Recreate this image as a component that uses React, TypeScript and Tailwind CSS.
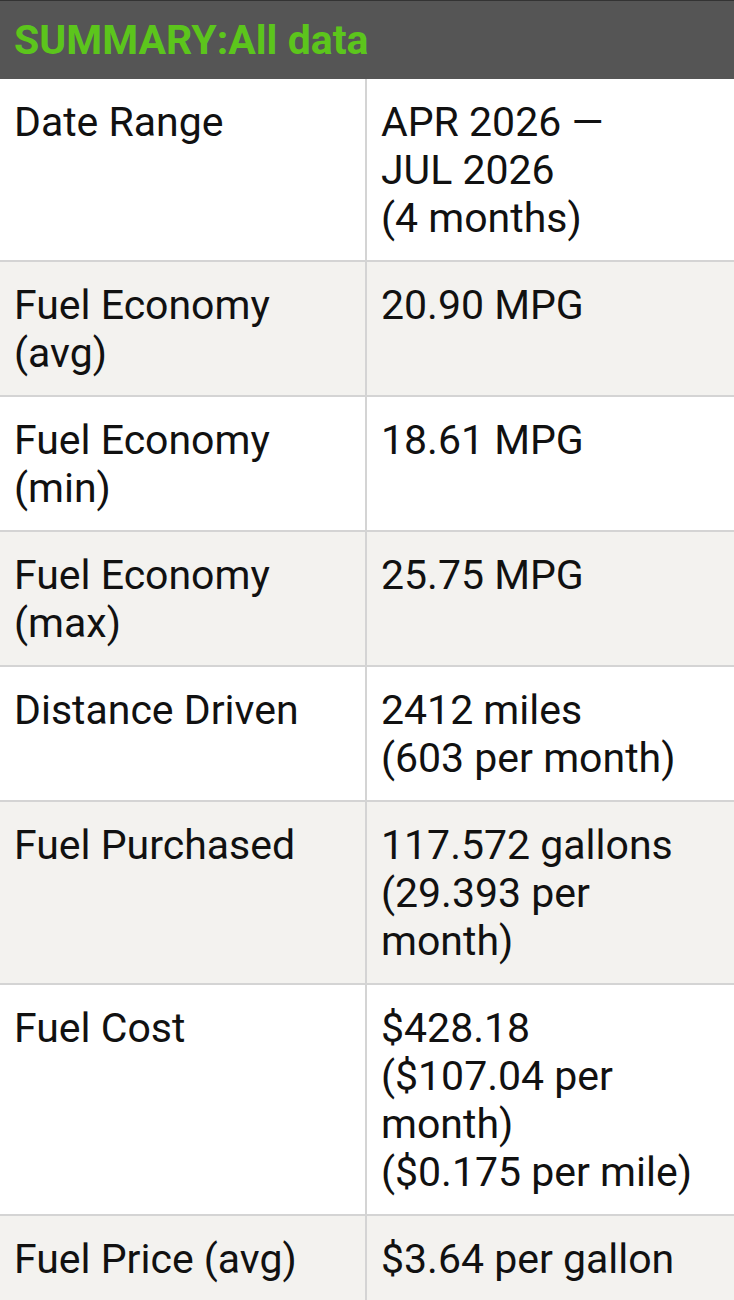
const rows: { label: string[]; value: string[] }[] = [
  { label: ['Date Range'], value: ['APR 2026 —', 'JUL 2026', '(4 months)'] },
  { label: ['Fuel Economy', '(avg)'], value: ['20.90 MPG'] },
  { label: ['Fuel Economy', '(min)'], value: ['18.61 MPG'] },
  { label: ['Fuel Economy', '(max)'], value: ['25.75 MPG'] },
  { label: ['Distance Driven'], value: ['2412 miles', '(603 per month)'] },
  { label: ['Fuel Purchased'], value: ['117.572 gallons', '(29.393 per', 'month)'] },
  { label: ['Fuel Cost'], value: ['$428.18', '($107.04 per', 'month)', '($0.175 per mile)'] },
  { label: ['Fuel Price (avg)'], value: ['$3.64 per gallon'] },
]

export default function App() {
  return (
    <div className="w-[734px] h-[1300px] overflow-hidden bg-white font-['Roboto',sans-serif] text-[41px] leading-[48px] text-[#111]">
      <div className="h-[79px] bg-[#555555] border-t border-[#333] flex items-center px-[14px]">
        <h1 className="text-[#5cc51c] font-bold text-[41px]">SUMMARY:All data</h1>
      </div>
      {rows.map((row, i) => (
        <div
          key={i}
          className={`grid grid-cols-[367px_1fr] border-b-2 border-[#d4d4d4] ${i % 2 === 1 ? 'bg-[#f3f2ef]' : 'bg-white'}`}
        >
          <div className="px-[14px] pt-[19px] pb-[18px] border-r-2 border-[#d4d4d4]">
            {row.label.map((l) => (
              <div key={l}>{l}</div>
            ))}
          </div>
          <div className="px-[14px] pt-[19px] pb-[18px]">
            {row.value.map((v) => (
              <div key={v} className="whitespace-nowrap">{v}</div>
            ))}
          </div>
        </div>
      ))}
    </div>
  )
}
